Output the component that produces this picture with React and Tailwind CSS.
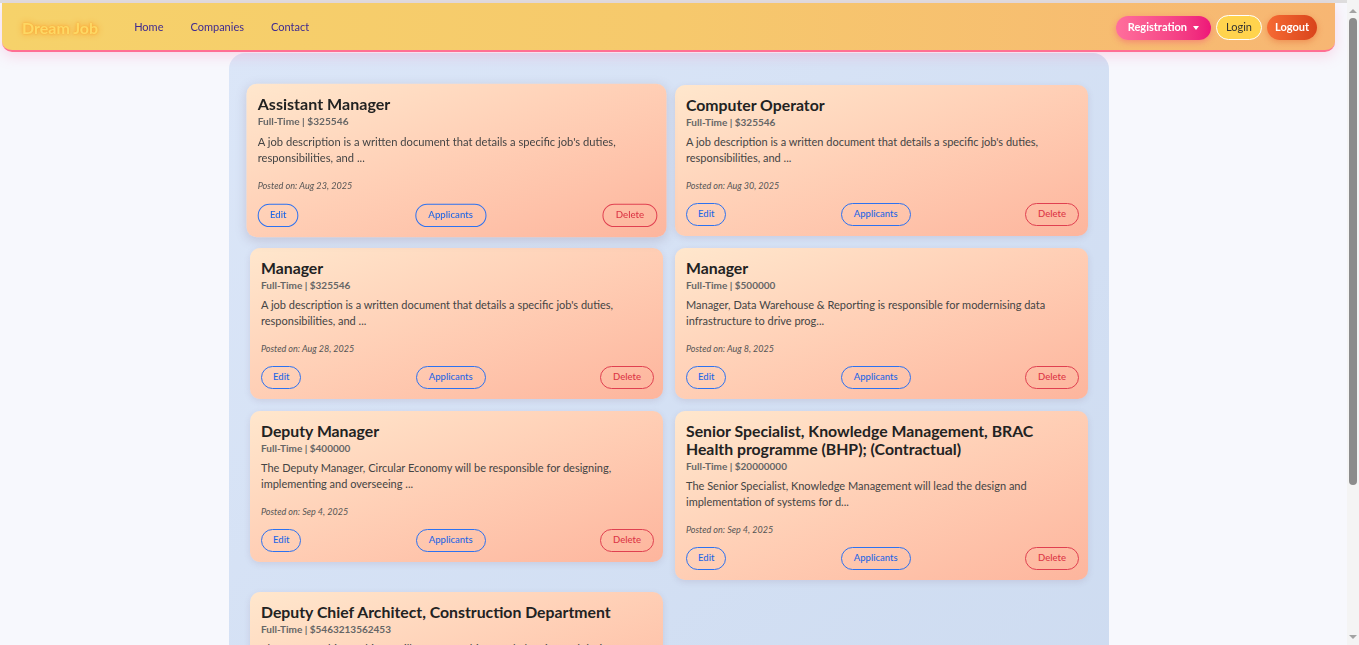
const jobs = [
  {
    title: "Assistant Manager",
    pay: "$325546",
    desc: "A job description is a written document that details a specific job's duties, responsibilities, and ...",
    date: "Aug 23, 2025",
    hover: true,
  },
  {
    title: "Computer Operator",
    pay: "$325546",
    desc: "A job description is a written document that details a specific job's duties, responsibilities, and ...",
    date: "Aug 30, 2025",
  },
  {
    title: "Manager",
    pay: "$325546",
    desc: "A job description is a written document that details a specific job's duties, responsibilities, and ...",
    date: "Aug 28, 2025",
  },
  {
    title: "Manager",
    pay: "$500000",
    desc: "Manager, Data Warehouse & Reporting is responsible for modernising data infrastructure to drive prog...",
    date: "Aug 8, 2025",
  },
  {
    title: "Deputy Manager",
    pay: "$400000",
    desc: "The Deputy Manager, Circular Economy will be responsible for designing, implementing and overseeing ...",
    date: "Sep 4, 2025",
  },
  {
    title: "Senior Specialist, Knowledge Management, BRAC Health programme (BHP); (Contractual)",
    pay: "$20000000",
    desc: "The Senior Specialist, Knowledge Management will lead the design and implementation of systems for d...",
    date: "Sep 4, 2025",
  },
  {
    title: "Deputy Chief Architect, Construction Department",
    pay: "$5463213562453",
    desc: "The Deputy Chief Architect will oversee architectural planning and design of construction proj...",
    date: "Sep 4, 2025",
  },
];

function JobCard({ job }) {
  return (
    <div
      className={`rounded-[10px] bg-gradient-to-br from-[#ffe7cd] to-[#fdb59d] pl-[11px] pr-[9px] pt-[11px] pb-[10px] ${
        job.hover
          ? "scale-[1.017] shadow-[0_3px_10px_rgba(120,90,120,0.22)]"
          : "shadow-[0_2px_6px_rgba(120,90,120,0.15)]"
      }`}
    >
      <h3 className="text-[15.8px] font-bold leading-[18px] text-[#222]">{job.title}</h3>
      <p className="mt-[1px] text-[10px] font-bold leading-[14px] text-[#666]">
        Full-Time | {job.pay}
      </p>
      <p className="mt-[5px] pr-[20px] text-[11px] leading-[16px] text-[#444]">{job.desc}</p>
      <p className="mt-[14px] text-[9px] italic leading-[12px] text-[#555]">
        Posted on: {job.date}
      </p>
      <div className="mt-[11px] flex items-center justify-between">
        <button className="h-[23px] rounded-full border border-[#2d72f0] px-[11px] text-[9.5px] font-medium text-[#1f66e5]">
          Edit
        </button>
        <button className="h-[23px] rounded-full border border-[#2d72f0] px-[12px] text-[9.5px] font-medium text-[#1f66e5]">
          Applicants
        </button>
        <button className="h-[23px] rounded-full border border-[#e04050] px-[12px] text-[9.5px] font-medium text-[#dc3545]">
          Delete
        </button>
      </div>
    </div>
  );
}

export default function App() {
  return (
    <div
      className="min-h-screen bg-[#f7f8fd] pt-[3px] pb-[70px]"
      style={{ fontFamily: 'Lato, "Noto Sans", sans-serif' }}
    >
      {/* top strip */}
      <div className="fixed inset-x-0 top-0 h-[3px] bg-[#dedede]" />

      {/* scrollbar look */}
      <div className="fixed top-0 right-0 bottom-0 z-20 flex w-[12px] flex-col items-center bg-[#f4f4f4] pt-[3px]">
        <span className="mt-[6px] h-0 w-0 border-x-[4px] border-b-[4px] border-x-transparent border-b-[#a3a3a3]" />
        <div className="mt-[5px] h-[467px] w-[8px] rounded-full bg-[#8c8c8c]" />
        <span className="mt-auto mb-[6px] h-0 w-0 border-x-[4px] border-t-[4px] border-x-transparent border-t-[#a3a3a3]" />
      </div>

      <div className="w-[1347px]">
        {/* navbar */}
        <nav className="relative z-10 ml-[2px] mr-[12px] flex h-[49px] items-center rounded-b-[10px] border-b-2 border-[#ff6f93] bg-gradient-to-r from-[#f6d26a] via-[#f6c96c] to-[#f7b673] pl-[20px] pr-[18px] pt-[2px] shadow-[0_4px_14px_rgba(255,120,170,0.25)]">
          <span className="text-[16px] font-bold text-[#fdd864] [text-shadow:0_0_6px_rgba(255,150,30,0.9),0_0_2px_rgba(255,140,0,0.5)]">
            Dream Job
          </span>
          <div className="ml-[36px] flex items-center gap-[27px] text-[11px] text-[#3f2a90]">
            <a>Home</a>
            <a>Companies</a>
            <a>Contact</a>
          </div>
          <div className="ml-auto flex items-center gap-[5px]">
            <button className="flex h-[24px] items-center gap-[6px] rounded-full bg-gradient-to-r from-[#ff6e9c] to-[#ee1579] px-[12px] text-[11px] font-bold text-white shadow-[0_2px_6px_rgba(240,40,120,0.35)]">
              Registration
              <span className="h-0 w-0 border-x-[3px] border-t-[4px] border-x-transparent border-t-white" />
            </button>
            <button className="h-[25px] rounded-full border border-white bg-[#ffd34d] px-[9px] text-[11px] text-[#333]">
              Login
            </button>
            <button className="h-[25px] rounded-full bg-gradient-to-r from-[#f66a33] to-[#d9441b] px-[8px] text-[11px] font-bold text-white shadow-[0_2px_6px_rgba(220,70,30,0.35)]">
              Logout
            </button>
          </div>
        </nav>

        {/* jobs container */}
        <main className="ml-[229px] mt-[1px] w-[880px] rounded-[16px] bg-gradient-to-br from-[#dbe6f8] to-[#cddbf0] px-[21px] pt-[32px] pb-[32px]">
          <div className="grid grid-cols-2 items-start gap-[12px]">
            {jobs.map((job, i) => (
              <JobCard key={i} job={job} />
            ))}
          </div>
        </main>
      </div>
    </div>
  );
}
